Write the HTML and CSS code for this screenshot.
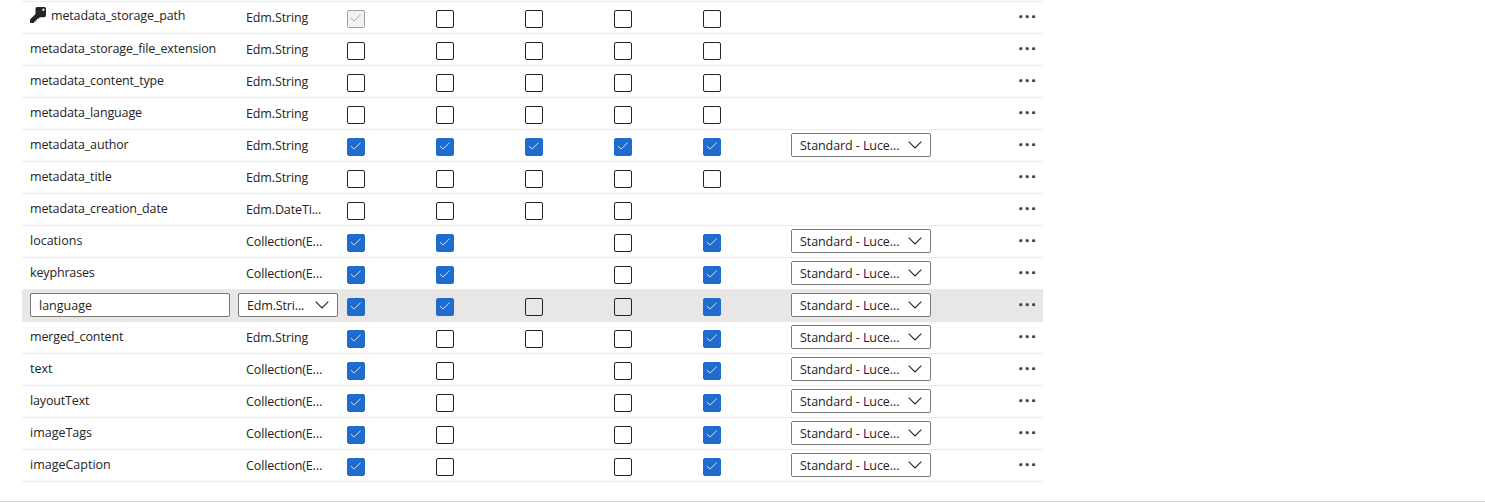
FILE: index.html
```
<!DOCTYPE html>
<html lang="en">
<head>
<meta charset="utf-8">
<title>Index fields</title>
<link rel="stylesheet" href="styles.css">
</head>
<body>
<svg class="defs" aria-hidden="true">
<symbol id="check" viewBox="0 0 18 18"><path d="M4.1 8.7 7.6 12.2 15 4.8"/></symbol>
<symbol id="chevron" viewBox="0 0 14 8"><path d="M.7.7 7 7 13.3.7"/></symbol>
<symbol id="dots" viewBox="0 0 17 4"><circle cx="1.8" cy="1.65" r="1.65"/><circle cx="8.2" cy="1.65" r="1.65"/><circle cx="14.6" cy="1.65" r="1.65"/></symbol>
</svg>
<main class="fields">
<div class="row"><span class="name meta key-name"><svg class="key" viewBox="0 0 16 16"><path fill-rule="evenodd" d="M7 0H14.5Q16 0 16 1.5V8.5Q16 10.3 14 10.3H9.8L8.5 11.8H7V13.3H5.5V14.8H4V16H0V12.5L5.5 7V1.5Q5.5 0 7 0ZM12.4 1.8V3.8H14.4V1.8Z"/></svg><span>metadata_storage_path</span></span><span class="type">Edm.String</span><svg class="box locked"><use href="#check"/></svg><i class="box"></i><i class="box"></i><i class="box"></i><i class="box"></i><span></span><svg class="dots"><use href="#dots"/></svg></div>
<div class="row"><span class="name meta">metadata_storage_file_extension</span><span class="type">Edm.String</span><i class="box"></i><i class="box"></i><i class="box"></i><i class="box"></i><i class="box"></i><span></span><svg class="dots"><use href="#dots"/></svg></div>
<div class="row"><span class="name meta">metadata_content_type</span><span class="type">Edm.String</span><i class="box"></i><i class="box"></i><i class="box"></i><i class="box"></i><i class="box"></i><span></span><svg class="dots"><use href="#dots"/></svg></div>
<div class="row"><span class="name meta">metadata_language</span><span class="type">Edm.String</span><i class="box"></i><i class="box"></i><i class="box"></i><i class="box"></i><i class="box"></i><span></span><svg class="dots"><use href="#dots"/></svg></div>
<div class="row"><span class="name meta">metadata_author</span><span class="type">Edm.String</span><svg class="box on"><use href="#check"/></svg><svg class="box on"><use href="#check"/></svg><svg class="box on"><use href="#check"/></svg><svg class="box on"><use href="#check"/></svg><svg class="box on"><use href="#check"/></svg><span class="select analyzer"><span>Standard - Luce...</span><svg class="chevron"><use href="#chevron"/></svg></span><svg class="dots"><use href="#dots"/></svg></div>
<div class="row"><span class="name meta">metadata_title</span><span class="type">Edm.String</span><i class="box"></i><i class="box"></i><i class="box"></i><i class="box"></i><i class="box"></i><span></span><svg class="dots"><use href="#dots"/></svg></div>
<div class="row"><span class="name meta">metadata_creation_date</span><span class="type">Edm.DateTi...</span><i class="box"></i><i class="box"></i><i class="box"></i><i class="box"></i><span></span><span></span><svg class="dots"><use href="#dots"/></svg></div>
<div class="row"><span class="name">locations</span><span class="type">Collection(E...</span><svg class="box on"><use href="#check"/></svg><svg class="box on"><use href="#check"/></svg><span></span><i class="box"></i><svg class="box on"><use href="#check"/></svg><span class="select analyzer"><span>Standard - Luce...</span><svg class="chevron"><use href="#chevron"/></svg></span><svg class="dots"><use href="#dots"/></svg></div>
<div class="row"><span class="name meta">keyphrases</span><span class="type">Collection(E...</span><svg class="box on"><use href="#check"/></svg><svg class="box on"><use href="#check"/></svg><span></span><i class="box"></i><svg class="box on"><use href="#check"/></svg><span class="select analyzer"><span>Standard - Luce...</span><svg class="chevron"><use href="#chevron"/></svg></span><svg class="dots"><use href="#dots"/></svg></div>
<div class="row active"><span class="input"><span>language</span></span><span class="select type-select"><span>Edm.Stri...</span><svg class="chevron"><use href="#chevron"/></svg></span><svg class="box on"><use href="#check"/></svg><svg class="box on"><use href="#check"/></svg><i class="box"></i><i class="box"></i><svg class="box on"><use href="#check"/></svg><span class="select analyzer"><span>Standard - Luce...</span><svg class="chevron"><use href="#chevron"/></svg></span><svg class="dots"><use href="#dots"/></svg></div>
<div class="row"><span class="name meta">merged_content</span><span class="type">Edm.String</span><svg class="box on"><use href="#check"/></svg><i class="box"></i><i class="box"></i><i class="box"></i><svg class="box on"><use href="#check"/></svg><span class="select analyzer"><span>Standard - Luce...</span><svg class="chevron"><use href="#chevron"/></svg></span><svg class="dots"><use href="#dots"/></svg></div>
<div class="row"><span class="name">text</span><span class="type">Collection(E...</span><svg class="box on"><use href="#check"/></svg><i class="box"></i><span></span><i class="box"></i><svg class="box on"><use href="#check"/></svg><span class="select analyzer"><span>Standard - Luce...</span><svg class="chevron"><use href="#chevron"/></svg></span><svg class="dots"><use href="#dots"/></svg></div>
<div class="row"><span class="name meta">layoutText</span><span class="type">Collection(E...</span><svg class="box on"><use href="#check"/></svg><i class="box"></i><span></span><i class="box"></i><svg class="box on"><use href="#check"/></svg><span class="select analyzer"><span>Standard - Luce...</span><svg class="chevron"><use href="#chevron"/></svg></span><svg class="dots"><use href="#dots"/></svg></div>
<div class="row"><span class="name">imageTags</span><span class="type">Collection(E...</span><svg class="box on"><use href="#check"/></svg><i class="box"></i><span></span><i class="box"></i><svg class="box on"><use href="#check"/></svg><span class="select analyzer"><span>Standard - Luce...</span><svg class="chevron"><use href="#chevron"/></svg></span><svg class="dots"><use href="#dots"/></svg></div>
<div class="row"><span class="name">imageCaption</span><span class="type">Collection(E...</span><svg class="box on"><use href="#check"/></svg><i class="box"></i><span></span><i class="box"></i><svg class="box on"><use href="#check"/></svg><span class="select analyzer"><span>Standard - Luce...</span><svg class="chevron"><use href="#chevron"/></svg></span><svg class="dots"><use href="#dots"/></svg></div>
</main>
<footer class="rule"></footer>
</body>
</html>
```
FILE: styles.css
```
* { box-sizing: border-box; }
body {
  margin: 0;
  padding-top: 1px;
  height: 504px;
  overflow: hidden;
  background: #fff;
  color: #242424;
  font: 12.5px/18px "Open Sans", "Noto Sans", sans-serif;
}
.defs { display: none; }
.fields {
  width: 1021px;
  margin-left: 22px;
  border-top: 1px solid #edebe9;
}
.row {
  display: grid;
  grid-template-columns: 216px 109px 89px 89px 89px 89px 88px 228px 24px;
  height: 32px;
  border-bottom: 1px solid #edebe9;
  align-items: start;
}
.active { background: #e9e7e5; border-bottom-color: #e9e7e5; }
.name { padding: 6px 0 0 8px; white-space: nowrap; }
.meta { letter-spacing: -0.15px; }
.key-name { display: flex; gap: 5px; padding-top: 5px; }
.key { width: 16px; height: 16px; fill: #242424; }
.type { padding: 7px 0 0 8px; white-space: nowrap; letter-spacing: -0.13px; }
.box {
  width: 18px;
  height: 18px;
  margin-top: 8px;
  border: 1px solid #242424;
  border-radius: 2px;
  fill: none;
}
.box use { width: 18px; height: 18px; transform: translate(-0.7px, -0.7px); }
.box.on { background: #1f6ccf; border-color: #1f6ccf; stroke: #e6f0fc; }
.box.locked { background: #f3f2f1; border-color: #a0a0a0; stroke: #9a9a9a; }
.input, .select {
  display: flex;
  align-items: center;
  height: 24px;
  margin-top: 3px;
  padding: 0 8px;
  background: #fff;
  border: 1px solid #7a7978;
  border-radius: 2px;
  white-space: nowrap;
}
.input > span, .select > span { padding-top: 2px; }
.input { width: 200px; margin-left: 8px; }
.select { justify-content: space-between; padding-right: 8px; letter-spacing: -0.08px; }
.type-select { width: 100px; letter-spacing: -0.15px; }
.analyzer { width: 140px; }
.chevron { width: 14px; height: 8px; fill: none; stroke: #242424; stroke-width: 1.1; }
.dots { width: 17px; height: 4px; margin-top: 13px; fill: #484848; }
.rule { margin-top: 19px; border-top: 1px solid #d6d6d6; }
```
